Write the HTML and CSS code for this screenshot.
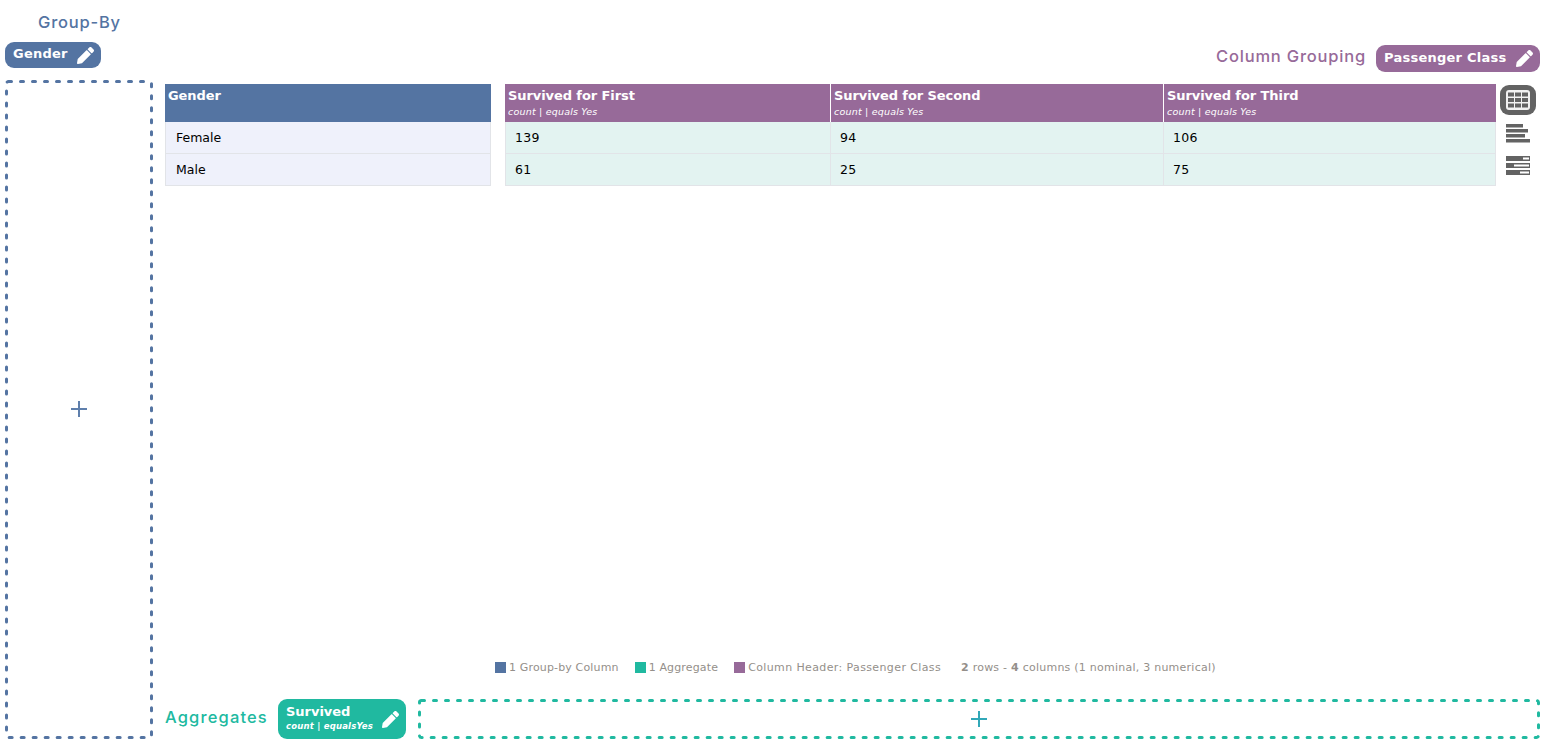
FILE: index.html
```html
<!DOCTYPE html>
<html lang="en">
<head>
<meta charset="utf-8">
<title>Pivot table</title>
<link rel="stylesheet" href="styles.css">
</head>
<body>
<svg class="defs" aria-hidden="true"><symbol id="pencil" viewBox="0 0 512 512"><path d="M497.9 142.1l-46.1 46.1c-4.7 4.7-12.3 4.7-17 0l-111-111c-4.7-4.7-4.7-12.3 0-17l46.1-46.1c18.7-18.7 49.1-18.7 67.9 0l60.1 60.1c18.8 18.7 18.8 49.1 0 67.9zM284.2 99.8L21.6 362.4.4 483.9c-2.9 16.4 11.4 30.6 27.8 27.8l121.5-21.3 262.6-262.6c4.7-4.7 4.7-12.3 0-17l-111-111c-4.8-4.7-12.4-4.7-17.1 0z"/></symbol></svg>
<div class="app">
  <aside class="left">
    <h2 class="title title-blue title-group">Group-By</h2>
    <div class="chip chip-blue chip-gender"><span class="chip-name">Gender</span><svg class="pencil"><use href="#pencil"/></svg></div>
    <div class="drop drop-blue">
      <svg class="dash"><rect/></svg>
      <svg class="plus" viewBox="0 0 16 16"><path d="M8 0v16M0 8h16"/></svg>
    </div>
  </aside>
  <main class="main">
    <div class="top">
      <h2 class="title title-purple">Column Grouping</h2>
      <div class="chip chip-purple chip-class"><span class="chip-name">Passenger Class</span><svg class="pencil"><use href="#pencil"/></svg></div>
    </div>
    <div class="tables">
      <table class="tbl tbl-group">
        <thead><tr><th>Gender</th></tr></thead>
        <tbody>
          <tr><td>Female</td></tr>
          <tr><td>Male</td></tr>
        </tbody>
      </table>
      <table class="tbl tbl-values">
        <colgroup><col class="c1"><col class="c2"><col class="c3"></colgroup>
        <thead><tr>
          <th>Survived for First<small>count | equals Yes</small></th>
          <th>Survived for Second<small>count | equals Yes</small></th>
          <th>Survived for Third<small>count | equals Yes</small></th>
        </tr></thead>
        <tbody>
          <tr><td>139</td><td>94</td><td>106</td></tr>
          <tr><td>61</td><td>25</td><td>75</td></tr>
        </tbody>
      </table>
      <div class="views">
        <div class="view view-active">
          <svg width="24" height="20" viewBox="0 0 24 20"><rect class="ic-w" width="24" height="20" rx="3"/><g class="ic-d"><rect x="2" y="2.500" width="6" height="4"/><rect x="9" y="2.500" width="6" height="4"/><rect x="16" y="2.500" width="6" height="4"/><rect x="2" y="8" width="6" height="4"/><rect x="9" y="8" width="6" height="4"/><rect x="16" y="8" width="6" height="4"/><rect x="2" y="13.500" width="6" height="4"/><rect x="9" y="13.500" width="6" height="4"/><rect x="16" y="13.500" width="6" height="4"/></g></svg>
        </div>
        <div class="view">
          <svg width="24" height="20" viewBox="0 0 24 20"><g class="ic-d"><rect y="1" width="17" height="3.500"/><rect y="6" width="22" height="3.500"/><rect y="11" width="19" height="3.500"/><rect y="16" width="24" height="3.500"/></g></svg>
        </div>
        <div class="view">
          <svg width="24" height="20" viewBox="0 0 24 20"><g class="ic-d"><rect y="0" width="24" height="5"/><rect y="7" width="24" height="5"/><rect y="14" width="24" height="5"/></g><g class="ic-w"><rect x="17" y="1.500" width="6" height="2"/><rect x="8" y="8.500" width="15" height="2"/><rect x="14" y="15.500" width="9" height="2"/></g></svg>
        </div>
      </div>
    </div>
    <div class="legend">
      <span class="lg-item"><i class="sw sw-blue"></i>1 Group-by Column</span>
      <span class="lg-item"><i class="sw sw-green"></i>1 Aggregate</span>
      <span class="lg-item lg-header"><i class="sw sw-purple"></i>Column Header: Passenger Class</span>
      <span class="lg-stats"><b>2</b> rows - <b>4</b> columns (1 nominal, 3 numerical)</span>
    </div>
    <div class="bottom">
      <h2 class="title title-green title-agg">Aggregates</h2>
      <div class="chip chip-green chip-agg">
        <div class="agg-text"><span class="chip-name">Survived</span><em>count | equalsYes</em></div>
        <svg class="pencil"><use href="#pencil"/></svg>
      </div>
      <div class="drop drop-green">
        <svg class="dash"><rect/></svg>
        <svg class="plus plus-green" viewBox="0 0 16 16"><path d="M8 0v16M0 8h16"/></svg>
      </div>
    </div>
  </main>
</div>
</body>
</html>
```
FILE: styles.css
```css
* { box-sizing: border-box; }
html, body { margin: 0; padding: 0; background: #fff; }
body { font-family: "DejaVu Sans", sans-serif; color: #000; overflow: hidden; }
.defs { display: none; }
.app { display: flex; width: 1547px; height: 746px; padding: 0 7px 7px 5px; gap: 12px; }

.left { width: 148px; flex: none; display: flex; flex-direction: column; }
.main { flex: 1; min-width: 0; display: flex; flex-direction: column; }

.title { margin: 0; font-weight: 500; font-family: Inter, "DejaVu Sans", sans-serif; font-size: 16.500px; line-height: 20px; letter-spacing: .8px; white-space: nowrap; }
.title-blue { color: #5474a2; }
.title-purple { color: #976a99; padding-bottom: 5px; }
.title-green { color: #20b9a0; }
.title-group { margin: 12px 0 0 33px; }
.title-agg { padding-bottom: 5px; width: 103px; letter-spacing: 1.150px; }

.chip { display: flex; align-items: center; justify-content: space-between; color: #fff; font-size: 13px; font-weight: 700; letter-spacing: .25px; border-radius: 9px; }
.chip-name { display: block; line-height: 16px; white-space: nowrap; }
.chip-blue { background: #5474a2; }
.chip-purple { background: #976a99; }
.chip-green { background: #20b9a0; }
.chip-gender { width: 96px; height: 26px; margin-top: 10px; padding: 0 7px 2px 8px; }
.chip-class { width: 164px; height: 27px; padding: 0 7px 2px 8px; }
.chip-agg { width: 128px; height: 40px; padding: 0 7px 1px 8px; flex: none; }
.chip-agg .chip-name { letter-spacing: -.03px; }
.pencil { width: 17px; height: 17px; fill: #fff; flex: none; }
.chip-gender .pencil, .chip-class .pencil { margin-top: 2px; }
.chip-agg .pencil { margin-top: 1px; }
.agg-text { display: flex; flex-direction: column; }
.agg-text em { font-size: 8.500px; line-height: 13px; letter-spacing: .2px; white-space: nowrap; }

.drop { position: relative; display: flex; align-items: center; justify-content: center; }
.drop-blue { color: #5474a2; flex: 1; margin-top: 12px; }
.drop-green { color: #20b9a0; flex: 1; height: 40px; margin-left: 2px; }
.dash { position: absolute; inset: 0; width: 100%; height: 100%; }
.dash rect { x: 1.500px; y: 1.500px; width: calc(100% - 3px); height: calc(100% - 3px); rx: 2px; fill: none; stroke: currentColor; stroke-width: 3px; stroke-linecap: round; stroke-dasharray: 3 9; }
.plus { width: 16px; height: 16px; fill: none; stroke: #5f7fac; stroke-width: 2; }
.drop-blue .plus { margin-bottom: 1px; }
.plus-green { stroke: #32a8b8; }

.top { display: flex; justify-content: flex-end; align-items: center; gap: 10px; margin-top: 45px; height: 27px; }
.tables { display: flex; align-items: flex-start; margin-top: 12px; }
.tbl { border-collapse: separate; border-spacing: 0; table-layout: fixed; font-size: 12.500px; }
.tbl th { height: 38px; padding: 4px 3px 0; text-align: left; vertical-align: top; color: #fff; font-size: 13px; font-weight: 700; line-height: 15px; letter-spacing: -.08px; white-space: nowrap; }
.tbl th small { display: block; font-size: 9.500px; line-height: 18px; font-weight: 400; font-style: italic; letter-spacing: .2px; }
.tbl td { height: 32px; padding: 0 10px; line-height: 16px; border-left: 1px solid #e2e4e8; border-bottom: 1px solid #e2e4e8; }
.tbl td:last-child { border-right: 1px solid #e2e4e8; }
.tbl-group { width: 326px; }
.tbl-group th { background: #5474a2; }
.tbl-group td { background: #eff1fb; }
.tbl-values { width: 991px; margin-left: 14px; }
.tbl-values th { background: #976a99; border-left: 1px solid #fff; }
.tbl-values th:first-child { border-left: 0; }
.tbl-values td { background: #e3f3f1; padding-left: 9px; letter-spacing: .25px; }
.c1 { width: 325px; }
.c2 { width: 333px; }
.c3 { width: 333px; }

.views { display: flex; flex-direction: column; align-items: center; width: 36px; margin: 1px 0 0 4px; gap: 3px; flex: none; }
.view { width: 36px; height: 30px; display: flex; align-items: center; justify-content: center; border-radius: 9px; }
.view-active { background: #636363; }
.ic-d { fill: #636363; }
.ic-w { fill: #fff; }
.view-active .ic-w { fill: #f2f2f2; }

.legend { display: flex; align-items: center; justify-content: flex-start; margin-top: auto; margin-left: 330px; height: 16px; font-size: 11px; color: #948f8a; white-space: nowrap; gap: 16px; letter-spacing: .15px; }
.lg-item { display: flex; align-items: center; gap: 3px; }
.lg-header { letter-spacing: .38px; }
.lg-stats { margin-left: 4px; letter-spacing: .24px; }
.sw { display: block; width: 11px; height: 11px; }
.sw-blue { background: #5474a2; }
.sw-green { background: #20b9a0; }
.sw-purple { background: #976a99; }
.bottom { display: flex; align-items: center; gap: 10px; margin-top: 24px; height: 40px; }
```
